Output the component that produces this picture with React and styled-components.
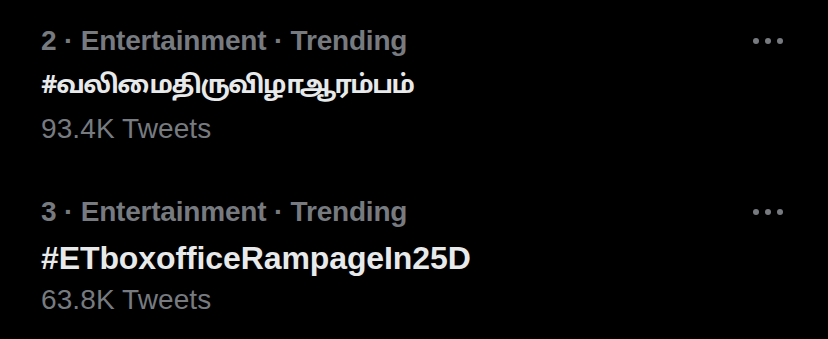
import styled, { createGlobalStyle } from "styled-components";

const Global = createGlobalStyle`
  html, body {
    margin: 0;
    background: #000;
  }
  body {
    font-family: "Liberation Sans", "Noto Sans", Arial, sans-serif;
  }
`;

const List = styled.div`
  width: 828px;
  height: 339px;
  background: #000;
  padding: 24px 0 0 41px;
  box-sizing: border-box;
  display: flex;
  flex-direction: column;
  gap: 53px;
`;

const Trend = styled.div`
  display: flex;
  justify-content: space-between;
  padding-right: 42px;
`;

const Info = styled.div`
  display: flex;
  flex-direction: column;
`;

const Meta = styled.div`
  color: #777b80;
  font-size: 28px;
  font-weight: 700;
  line-height: 34px;
  letter-spacing: -0.2px;
`;

const Title = styled.div`
  color: #e7e9ea;
  font-weight: 700;
  line-height: 58px;
  font-size: ${(p) => (p.$tamil ? "25px" : "32px")};
  letter-spacing: ${(p) => (p.$tamil ? "-1.5px" : "-0.1px")};
  font-family: ${(p) =>
    p.$tamil ? '"Noto Sans Tamil", "Lohit Tamil", "DejaVu Sans", sans-serif' : '"Liberation Sans", Arial, sans-serif'};
`;

const Count = styled.div`
  color: #777b80;
  font-size: 28px;
  line-height: 26px;
  letter-spacing: 0.1px;
`;

const More = styled.svg`
  width: 36px;
  height: 34px;
`;

const trends = [
  { rank: 2, title: "#வலிமைதிருவிழாஆரம்பம்", count: "93.4K", tamil: true },
  { rank: 3, title: "#ETboxofficeRampageIn25D", count: "63.8K" },
];

export default function App() {
  return (
    <>
      <Global />
      <List>
        {trends.map((t) => (
          <Trend key={t.rank}>
            <Info>
              <Meta>
                {t.rank} · Entertainment · Trending
              </Meta>
              <Title $tamil={t.tamil}>{t.title}</Title>
              <Count>{t.count} Tweets</Count>
            </Info>
            <More viewBox="0 0 36 34">
              <circle cx="6" cy="17" r="3" fill="#777b80" />
              <circle cx="18" cy="17" r="3" fill="#777b80" />
              <circle cx="30" cy="17" r="3" fill="#777b80" />
            </More>
          </Trend>
        ))}
      </List>
    </>
  );
}
